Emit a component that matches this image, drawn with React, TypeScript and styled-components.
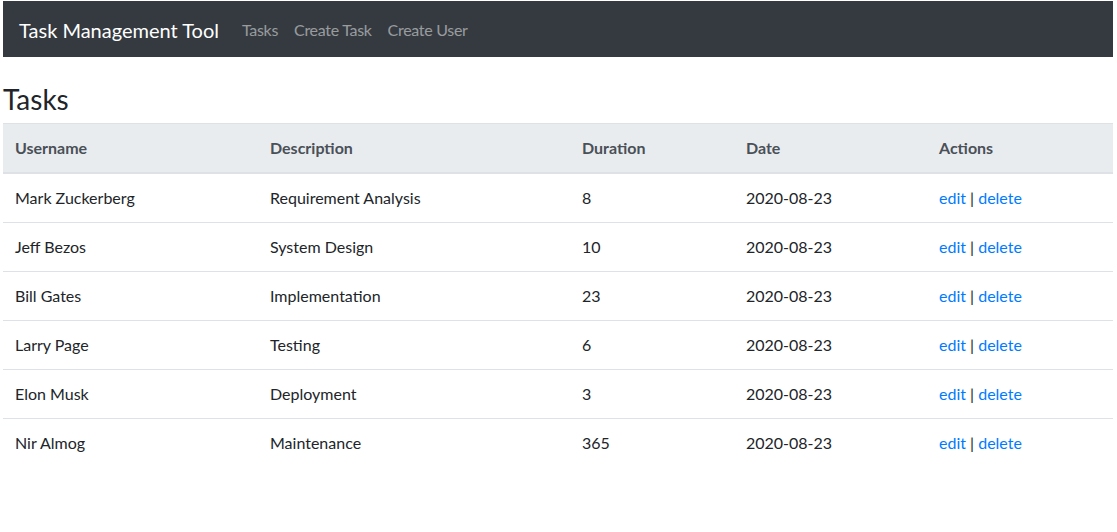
import React from "react";
import styled, { createGlobalStyle } from "styled-components";

const GlobalStyle = createGlobalStyle`
  * { box-sizing: border-box; }
  body {
    margin: 0;
    font-family: Lato, "Noto Sans", sans-serif;
    font-size: 16px;
    line-height: 1.5;
    color: #212529;
    background: #fff;
  }
`;

const Container = styled.div`
  width: 1110px;
  margin: 1px 0 0 3px;
`;

const Navbar = styled.nav`
  display: flex;
  align-items: center;
  height: 56px;
  padding: 8px 16px;
  background: #343a40;
`;

const Brand = styled.a`
  font-size: 20px;
  line-height: 30px;
  padding: 6px 0 4px;
  margin-right: 15px;
  color: #fff;
  text-decoration: none;
  white-space: nowrap;
`;

const NavList = styled.ul`
  display: flex;
  list-style: none;
  margin: 0;
  padding: 0;
`;

const NavLink = styled.a`
  display: block;
  padding: 9px 8px 7px;
  color: rgba(255, 255, 255, 0.5);
  letter-spacing: -0.3px;
  text-decoration: none;
  white-space: nowrap;
`;

const Spacer = styled.div`
  height: 24px;
`;

const Heading = styled.h3`
  margin: 0 0 6px;
  padding-top: 2px;
  font-size: 28px;
  font-weight: 400;
  line-height: 1.2;
`;

const Table = styled.table`
  width: 100%;
  border-collapse: collapse;
  table-layout: fixed;
`;

const Th = styled.th`
  text-align: left;
  padding: 12px;
  font-weight: 700;
  color: #495057;
  background: #e9ecef;
  border-top: 1px solid #dee2e6;
  border-bottom: 2px solid #dee2e6;
  vertical-align: bottom;
`;

const Td = styled.td`
  padding: 12px;
  border-top: 1px solid #dee2e6;
  vertical-align: top;
  white-space: nowrap;
`;

const Row = styled.tr``;

const Link = styled.a`
  color: #007bff;
  text-decoration: none;
`;

const widths = [255, 312, 164, 193, 186];

const tasks = [
  ["Mark Zuckerberg", "Requirement Analysis", "8"],
  ["Jeff Bezos", "System Design", "10"],
  ["Bill Gates", "Implementation", "23"],
  ["Larry Page", "Testing", "6"],
  ["Elon Musk", "Deployment", "3"],
  ["Nir Almog", "Maintenance", "365"],
];

export default function App() {
  return (
    <>
      <GlobalStyle />
      <Container>
        <Navbar>
          <Brand href="#">Task Management Tool</Brand>
          <NavList>
            <li><NavLink href="#">Tasks</NavLink></li>
            <li><NavLink href="#">Create Task</NavLink></li>
            <li><NavLink href="#">Create User</NavLink></li>
          </NavList>
        </Navbar>
        <Spacer />
        <Heading>Tasks</Heading>
        <Table>
          <colgroup>
            {widths.map((w, i) => (
              <col key={i} style={{ width: w }} />
            ))}
          </colgroup>
          <thead>
            <tr>
              <Th>Username</Th>
              <Th>Description</Th>
              <Th>Duration</Th>
              <Th>Date</Th>
              <Th>Actions</Th>
            </tr>
          </thead>
          <tbody>
            {tasks.map(([user, desc, dur]) => (
              <Row key={user}>
                <Td>{user}</Td>
                <Td>{desc}</Td>
                <Td>{dur}</Td>
                <Td>2020-08-23</Td>
                <Td>
                  <Link href="#">edit</Link> | <Link href="#">delete</Link>
                </Td>
              </Row>
            ))}
          </tbody>
        </Table>
      </Container>
    </>
  );
}
